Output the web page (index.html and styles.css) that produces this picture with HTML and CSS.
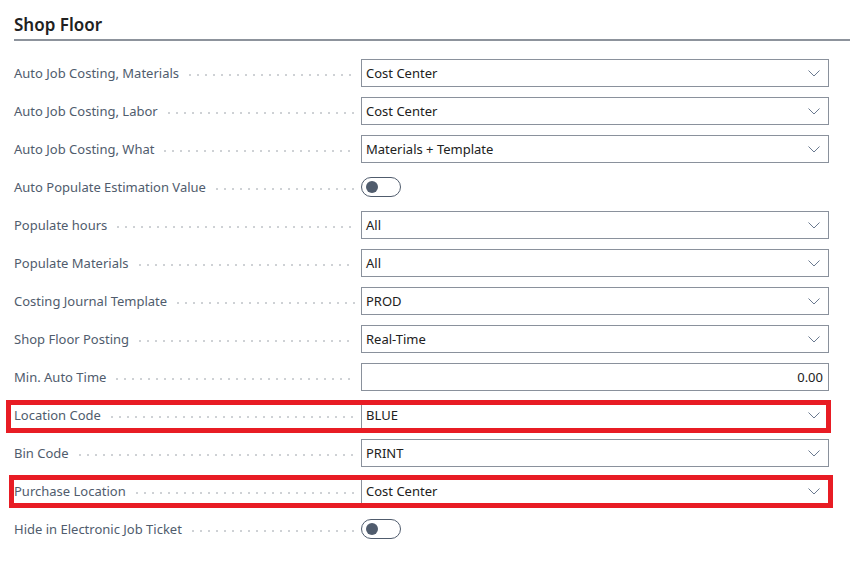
FILE: index.html
```html
<!DOCTYPE html>
<html>
<head>
<meta charset="utf-8">
<link rel="stylesheet" href="styles.css">
</head>
<body>
<div class="page">
  <h2 class="section-title">Shop Floor</h2>
  <div class="fields">
    <div class="row">
      <div class="label"><span class="text">Auto Job Costing, Materials</span><span class="dots"></span></div>
      <div class="select"><span class="value">Cost Center</span><svg class="chev" width="12" height="7" viewBox="0 0 12 7"><polyline points="0.5,0.5 6,6 11.5,0.5" fill="none" stroke="#6b7a90" stroke-width="1"/></svg></div>
    </div>
    <div class="row">
      <div class="label"><span class="text">Auto Job Costing, Labor</span><span class="dots"></span></div>
      <div class="select"><span class="value">Cost Center</span><svg class="chev" width="12" height="7" viewBox="0 0 12 7"><polyline points="0.5,0.5 6,6 11.5,0.5" fill="none" stroke="#6b7a90" stroke-width="1"/></svg></div>
    </div>
    <div class="row">
      <div class="label"><span class="text">Auto Job Costing, What</span><span class="dots"></span></div>
      <div class="select"><span class="value">Materials + Template</span><svg class="chev" width="12" height="7" viewBox="0 0 12 7"><polyline points="0.5,0.5 6,6 11.5,0.5" fill="none" stroke="#6b7a90" stroke-width="1"/></svg></div>
    </div>
    <div class="row">
      <div class="label"><span class="text">Auto Populate Estimation Value</span><span class="dots"></span></div>
      <div class="toggle-cell"><span class="toggle"><span class="knob"></span></span></div>
    </div>
    <div class="row">
      <div class="label"><span class="text">Populate hours</span><span class="dots"></span></div>
      <div class="select"><span class="value">All</span><svg class="chev" width="12" height="7" viewBox="0 0 12 7"><polyline points="0.5,0.5 6,6 11.5,0.5" fill="none" stroke="#6b7a90" stroke-width="1"/></svg></div>
    </div>
    <div class="row">
      <div class="label"><span class="text">Populate Materials</span><span class="dots"></span></div>
      <div class="select"><span class="value">All</span><svg class="chev" width="12" height="7" viewBox="0 0 12 7"><polyline points="0.5,0.5 6,6 11.5,0.5" fill="none" stroke="#6b7a90" stroke-width="1"/></svg></div>
    </div>
    <div class="row">
      <div class="label"><span class="text">Costing Journal Template</span><span class="dots"></span></div>
      <div class="select"><span class="value">PROD</span><svg class="chev" width="12" height="7" viewBox="0 0 12 7"><polyline points="0.5,0.5 6,6 11.5,0.5" fill="none" stroke="#6b7a90" stroke-width="1"/></svg></div>
    </div>
    <div class="row">
      <div class="label"><span class="text">Shop Floor Posting</span><span class="dots"></span></div>
      <div class="select"><span class="value">Real-Time</span><svg class="chev" width="12" height="7" viewBox="0 0 12 7"><polyline points="0.5,0.5 6,6 11.5,0.5" fill="none" stroke="#6b7a90" stroke-width="1"/></svg></div>
    </div>
    <div class="row">
      <div class="label"><span class="text">Min. Auto Time</span><span class="dots"></span></div>
      <div class="select number"><span class="value">0.00</span></div>
    </div>
    <div class="row">
      <span class="highlight hl-1"></span>
      <div class="label"><span class="text">Location Code</span><span class="dots"></span></div>
      <div class="select"><span class="value">BLUE</span><svg class="chev" width="12" height="7" viewBox="0 0 12 7"><polyline points="0.5,0.5 6,6 11.5,0.5" fill="none" stroke="#6b7a90" stroke-width="1"/></svg></div>
    </div>
    <div class="row">
      <div class="label"><span class="text">Bin Code</span><span class="dots"></span></div>
      <div class="select"><span class="value">PRINT</span><svg class="chev" width="12" height="7" viewBox="0 0 12 7"><polyline points="0.5,0.5 6,6 11.5,0.5" fill="none" stroke="#6b7a90" stroke-width="1"/></svg></div>
    </div>
    <div class="row">
      <span class="highlight hl-2"></span>
      <div class="label"><span class="text">Purchase Location</span><span class="dots"></span></div>
      <div class="select"><span class="value">Cost Center</span><svg class="chev" width="12" height="7" viewBox="0 0 12 7"><polyline points="0.5,0.5 6,6 11.5,0.5" fill="none" stroke="#6b7a90" stroke-width="1"/></svg></div>
    </div>
    <div class="row">
      <div class="label"><span class="text">Hide in Electronic Job Ticket</span><span class="dots"></span></div>
      <div class="toggle-cell"><span class="toggle"><span class="knob"></span></span></div>
    </div>
  </div>
</div>
</body>
</html>
```

FILE: styles.css
```css
html, body {
  margin: 0;
  padding: 0;
  background: #ffffff;
}

body {
  font-family: "Segoe UI", "Noto Sans", "Open Sans", sans-serif;
  font-size: 13px;
  color: #212121;
}

.page {
  padding: 13px 12px 0 14px;
  width: 836px;
}

.section-title {
  margin: 0;
  font-size: 17px;
  font-weight: 600;
  color: #212121;
  line-height: 24px;
  padding-bottom: 2px;
  border-bottom: 2px solid #8d939c;
}

.fields {
  display: flex;
  flex-direction: column;
  gap: 10px;
  padding-top: 18px;
}

.row {
  position: relative;
  display: flex;
  align-items: center;
  height: 28px;
}

.label {
  width: 347px;
  flex: none;
  display: flex;
  align-items: center;
  color: #505c6d;
  padding-right: 6px;
  box-sizing: border-box;
}

.label .text {
  white-space: nowrap;
}

.dots {
  flex: 1;
  height: 2px;
  margin-left: 7px;
  margin-top: 3px;
  background-image: radial-gradient(circle, #cdd0d4 0.7px, transparent 1px);
  background-size: 8px 2px;
  background-repeat: repeat-x;
}

.select {
  width: 468px;
  height: 28px;
  box-sizing: border-box;
  border: 1px solid #8a919c;
  display: flex;
  align-items: center;
  justify-content: space-between;
  padding: 0 8px 0 4px;
  background: #fff;
}

.select .value {
  font-size: 13px;
  color: #212121;
}

.select.number {
  justify-content: flex-end;
  padding-right: 5px;
}

.chev {
  display: block;
  margin-top: 1px;
}

.toggle-cell {
  width: 468px;
  display: flex;
  align-items: center;
}

.toggle {
  width: 40px;
  height: 20px;
  box-sizing: border-box;
  border: 1px solid #505c6d;
  border-radius: 10px;
  display: flex;
  align-items: center;
  padding-left: 4px;
}

.knob {
  width: 12px;
  height: 12px;
  border-radius: 50%;
  background: #505c6d;
}

.highlight {
  position: absolute;
  border: 5px solid #e81c24;
  box-sizing: border-box;
  pointer-events: none;
}

.hl-1 {
  left: -8px;
  top: -1px;
  width: 825px;
  height: 33px;
}

.hl-2 {
  left: -5px;
  top: -2px;
  width: 824px;
  height: 33px;
}
```
